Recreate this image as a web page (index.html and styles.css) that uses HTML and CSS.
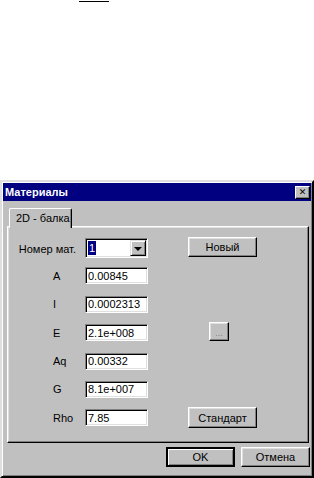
FILE: index.html
```html
<!DOCTYPE html>
<html>
<head>
  <meta name="viewport" content="width=device-width, initial-scale=1">
  <title>Материалы</title>
  <link rel="stylesheet" href="styles.css">
</head>
<body>
  <div class="top-mark"></div>

  <div class="dialog">
    <div class="title-bar">
      <span class="title-text">Материалы</span>
      <button class="close-button" type="button">&#x2715;</button>
    </div>

    <div class="tab">2D - балка</div>
    <div class="tab-panel">
      <div class="form-grid">
        <label class="field-label first-label">Номер мат.</label>
        <div class="combo">
          <span class="combo-value"><span class="selected-text">1</span></span>
          <span class="combo-arrow"></span>
        </div>
        <button class="win-button new-button" type="button">Новый</button>

        <label class="field-label">A</label>
        <input class="field-input" type="text" value="0.00845">

        <label class="field-label">I</label>
        <input class="field-input" type="text" value="0.0002313">

        <label class="field-label">E</label>
        <input class="field-input" type="text" value="2.1e+008">
        <button class="win-button dots-button" type="button">...</button>

        <label class="field-label">Aq</label>
        <input class="field-input" type="text" value="0.00332">

        <label class="field-label">G</label>
        <input class="field-input" type="text" value="8.1e+007">

        <label class="field-label">Rho</label>
        <input class="field-input" type="text" value="7.85">
        <button class="win-button standard-button" type="button">Стандарт</button>
      </div>
    </div>

    <div class="dialog-buttons">
      <button class="win-button default-button" type="button">OK</button>
      <button class="win-button" type="button">Отмена</button>
    </div>
  </div>
</body>
</html>
```

FILE: styles.css
```css
html {
  height: 100%;
}

body {
  margin: 0;
  width: 314px;
  height: 478px;
  overflow: hidden;
  background-color: #ffffff;
  font-family: "Liberation Sans", Arial, sans-serif;
  font-size: 11px;
  color: #000000;
}

/* stray line at the top of the scan */
.top-mark {
  width: 30px;
  height: 1px;
  margin-top: 1px;
  margin-left: 79px;
  background-color: #000000;
}

.dialog {
  box-sizing: border-box;
  width: 314px;
  height: 298px;
  margin-top: 178px;
  padding: 1px;
  background-color: #c0c0c0;
  border: 2px solid;
  border-color: #dfdfdf #000000 #000000 #dfdfdf;
  box-shadow: inset 1px 1px 0 #ffffff, inset -1px -1px 0 #808080;
}

.title-bar {
  display: flex;
  align-items: center;
  justify-content: space-between;
  height: 18px;
  padding: 0 1px 0 2px;
  background-color: #000080;
}

.title-text {
  color: #ffffff;
  font-weight: bold;
  font-size: 11px;
}

.close-button {
  box-sizing: border-box;
  width: 15px;
  height: 13px;
  padding: 0;
  font-family: "DejaVu Sans", sans-serif;
  font-size: 9px;
  font-weight: bold;
  line-height: 9px;
  color: #000000;
  background-color: #c0c0c0;
  border: 1px solid;
  border-color: #ffffff #000000 #000000 #ffffff;
  box-shadow: inset -1px -1px 0 #808080;
}

.tab {
  position: relative;
  z-index: 1;
  box-sizing: border-box;
  width: 63px;
  height: 20px;
  margin-top: 7px;
  margin-left: 6px;
  margin-bottom: -2px;
  padding: 3px 0 0 6px;
  background-color: #c0c0c0;
  border-top: 1px solid #ffffff;
  border-left: 1px solid #ffffff;
  border-right: 1px solid #000000;
  border-radius: 2px 2px 0 0;
  box-shadow: inset -1px 0 0 #808080;
}

.tab-panel {
  box-sizing: border-box;
  width: 302px;
  height: 217px;
  margin-left: 4px;
  padding-top: 11px;
  border: 1px solid;
  border-color: #ffffff #000000 #000000 #ffffff;
  box-shadow: inset -1px -1px 0 #808080, inset 1px 1px 0 #dfdfdf;
}

.form-grid {
  display: grid;
  grid-template-columns: 77px 63px 40px 69px;
  grid-template-rows: 18px repeat(6, 17px);
  row-gap: 11.4px;
}

.field-label {
  grid-column: 1;
  align-self: center;
  padding-left: 45px;
}

.first-label {
  justify-self: end;
  padding-left: 0;
  margin-right: 9px;
  margin-top: 3px;
}

.combo {
  grid-column: 2;
  box-sizing: border-box;
  display: flex;
  align-self: start;
  height: 20px;
  padding: 0 1px 1px 0;
  background-color: #ffffff;
  border: 1px solid;
  border-color: #808080 #ffffff #ffffff #808080;
  box-shadow: inset 1px 1px 0 #000000, inset -1px -1px 0 #dfdfdf;
}

.combo-value {
  flex: 1;
  padding: 2px 0 0 2px;
}

.selected-text {
  display: inline-block;
  padding: 0 1px;
  line-height: 14px;
  color: #ffffff;
  background-color: #000080;
}

.combo-arrow {
  box-sizing: border-box;
  width: 16px;
  height: 16px;
  margin-top: 1px;
  display: flex;
  align-items: center;
  justify-content: center;
  background-color: #c0c0c0;
  border: 1px solid;
  border-color: #dfdfdf #000000 #000000 #dfdfdf;
  box-shadow: inset 1px 1px 0 #ffffff, inset -1px -1px 0 #808080;
}

.combo-arrow::after {
  content: "";
  border-top: 4px solid #000000;
  border-left: 4px solid transparent;
  border-right: 4px solid transparent;
  margin-top: 1px;
}

.field-input {
  grid-column: 2;
  box-sizing: border-box;
  width: 63px;
  height: 17px;
  margin: 0;
  padding: 0 0 0 2px;
  font-family: "Liberation Sans", Arial, sans-serif;
  font-size: 11px;
  color: #000000;
  background-color: #ffffff;
  border: 1px solid;
  border-color: #808080 #ffffff #ffffff #808080;
  box-shadow: inset 1px 1px 0 #000000, inset -1px -1px 0 #dfdfdf;
  outline: none;
}

.win-button {
  box-sizing: border-box;
  width: 69px;
  height: 20px;
  padding: 0;
  font-family: "Liberation Sans", Arial, sans-serif;
  font-size: 11px;
  color: #000000;
  background-color: #c0c0c0;
  border: 1px solid;
  border-color: #ffffff #000000 #000000 #ffffff;
  box-shadow: inset -1px -1px 0 #808080, inset 1px 1px 0 #dfdfdf;
}

.new-button {
  grid-column: 4;
  grid-row: 1;
  margin-top: -1px;
}

.dots-button {
  grid-column: 4;
  grid-row: 4;
  width: 20px;
  height: 19px;
  margin-top: -2px;
  margin-left: 21px;
  padding-top: 2px;
  font-size: 9px;
  color: #808080;
}

.standard-button {
  grid-column: 4;
  grid-row: 7;
  height: 21px;
  margin-top: -2px;
}

.dialog-buttons {
  display: flex;
  justify-content: flex-end;
  gap: 6px;
  margin-top: 4px;
  padding-right: 1px;
}

.default-button {
  border: 2px solid #000000;
  box-shadow: inset 1px 1px 0 #ffffff, inset -1px -1px 0 #808080;
}
```
